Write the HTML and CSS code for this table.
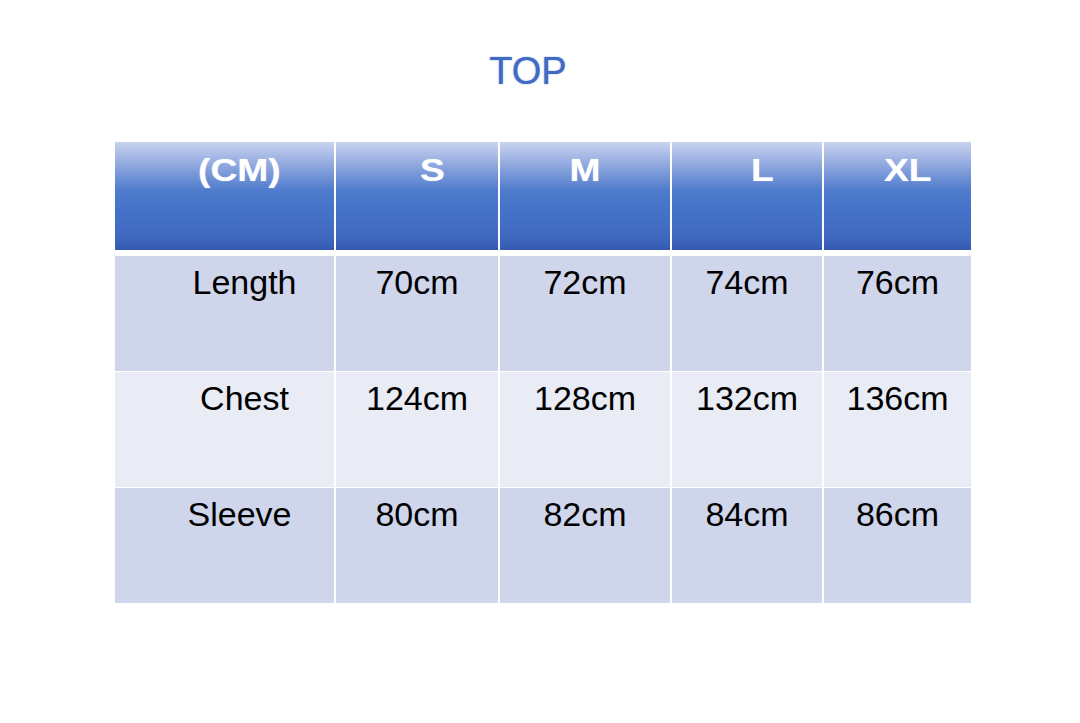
FILE: index.html
```html
<!DOCTYPE html>
<html>
<head>
<meta charset="utf-8">
<link rel="stylesheet" href="styles.css">
</head>
<body>
<div class="page">
  <h1 class="title">TOP</h1>
  <div class="table">
    <div class="grid head">
      <div class="hcell shift"><span class="wide">(CM)</span></div>
      <div class="hcell shift"><span class="wide">S</span></div>
      <div class="hcell"><span class="wide">M</span></div>
      <div class="hcell shift"><span class="wide">L</span></div>
      <div class="hcell shift-sm"><span class="wide">XL</span></div>
    </div>
    <div class="grid body">
      <div class="cell dark label">Length</div>
      <div class="cell dark">70cm</div>
      <div class="cell dark">72cm</div>
      <div class="cell dark">74cm</div>
      <div class="cell dark">76cm</div>

      <div class="cell light label">Chest</div>
      <div class="cell light">124cm</div>
      <div class="cell light">128cm</div>
      <div class="cell light">132cm</div>
      <div class="cell light">136cm</div>

      <div class="cell dark label-sm">Sleeve</div>
      <div class="cell dark">80cm</div>
      <div class="cell dark">82cm</div>
      <div class="cell dark">84cm</div>
      <div class="cell dark">86cm</div>
    </div>
  </div>
</div>
</body>
</html>
```
FILE: styles.css
```css
html, body {
  margin: 0;
  padding: 0;
  background: #ffffff;
}
.page {
  width: 1080px;
  height: 723px;
  padding-top: 52px;
  box-sizing: border-box;
  font-family: "Liberation Sans", Arial, sans-serif;
}
.title {
  margin: 0;
  padding-right: 24px;
  text-align: center;
  font-size: 38px;
  line-height: 38px;
  font-weight: normal;
  color: #3f6bc4;
  text-shadow: 0 0 1.5px rgba(50, 90, 180, 0.7);
}
.table {
  margin: 52px 0 0 115px;
  width: 856px;
}
.grid {
  display: grid;
  grid-template-columns: 219px 162px 170px 150px 147px;
  column-gap: 2px;
}
.head {
  height: 108px;
}
.hcell {
  background: linear-gradient(to bottom, #c8d3ee 0%, #a9bbe6 12%, #7d9bd9 28%, #4f7bcd 45%, #4572c8 65%, #3f68bf 88%, #3559b1 100%);
  color: #ffffff;
  text-align: center;
  font-weight: bold;
  font-size: 31px;
  line-height: 31px;
  padding-top: 13px;
  box-sizing: border-box;
  text-shadow: 0 0 1px rgba(255, 255, 255, 0.6);
}
.wide {
  display: inline-block;
  transform: scaleX(1.2);
}
.shift {
  padding-left: 30px;
}
.shift-sm {
  padding-left: 20px;
}
.body {
  margin-top: 6px;
  grid-template-rows: 115px 115px 115px;
  row-gap: 1px;
}
.cell {
  text-align: center;
  font-size: 34px;
  line-height: 34px;
  padding-top: 9px;
  color: #000000;
  box-sizing: border-box;
}
.dark {
  background: #cfd5ea;
}
.light {
  background: #e9ebf5;
}
.label {
  padding-left: 40px;
}
.label-sm {
  padding-left: 30px;
}
```
